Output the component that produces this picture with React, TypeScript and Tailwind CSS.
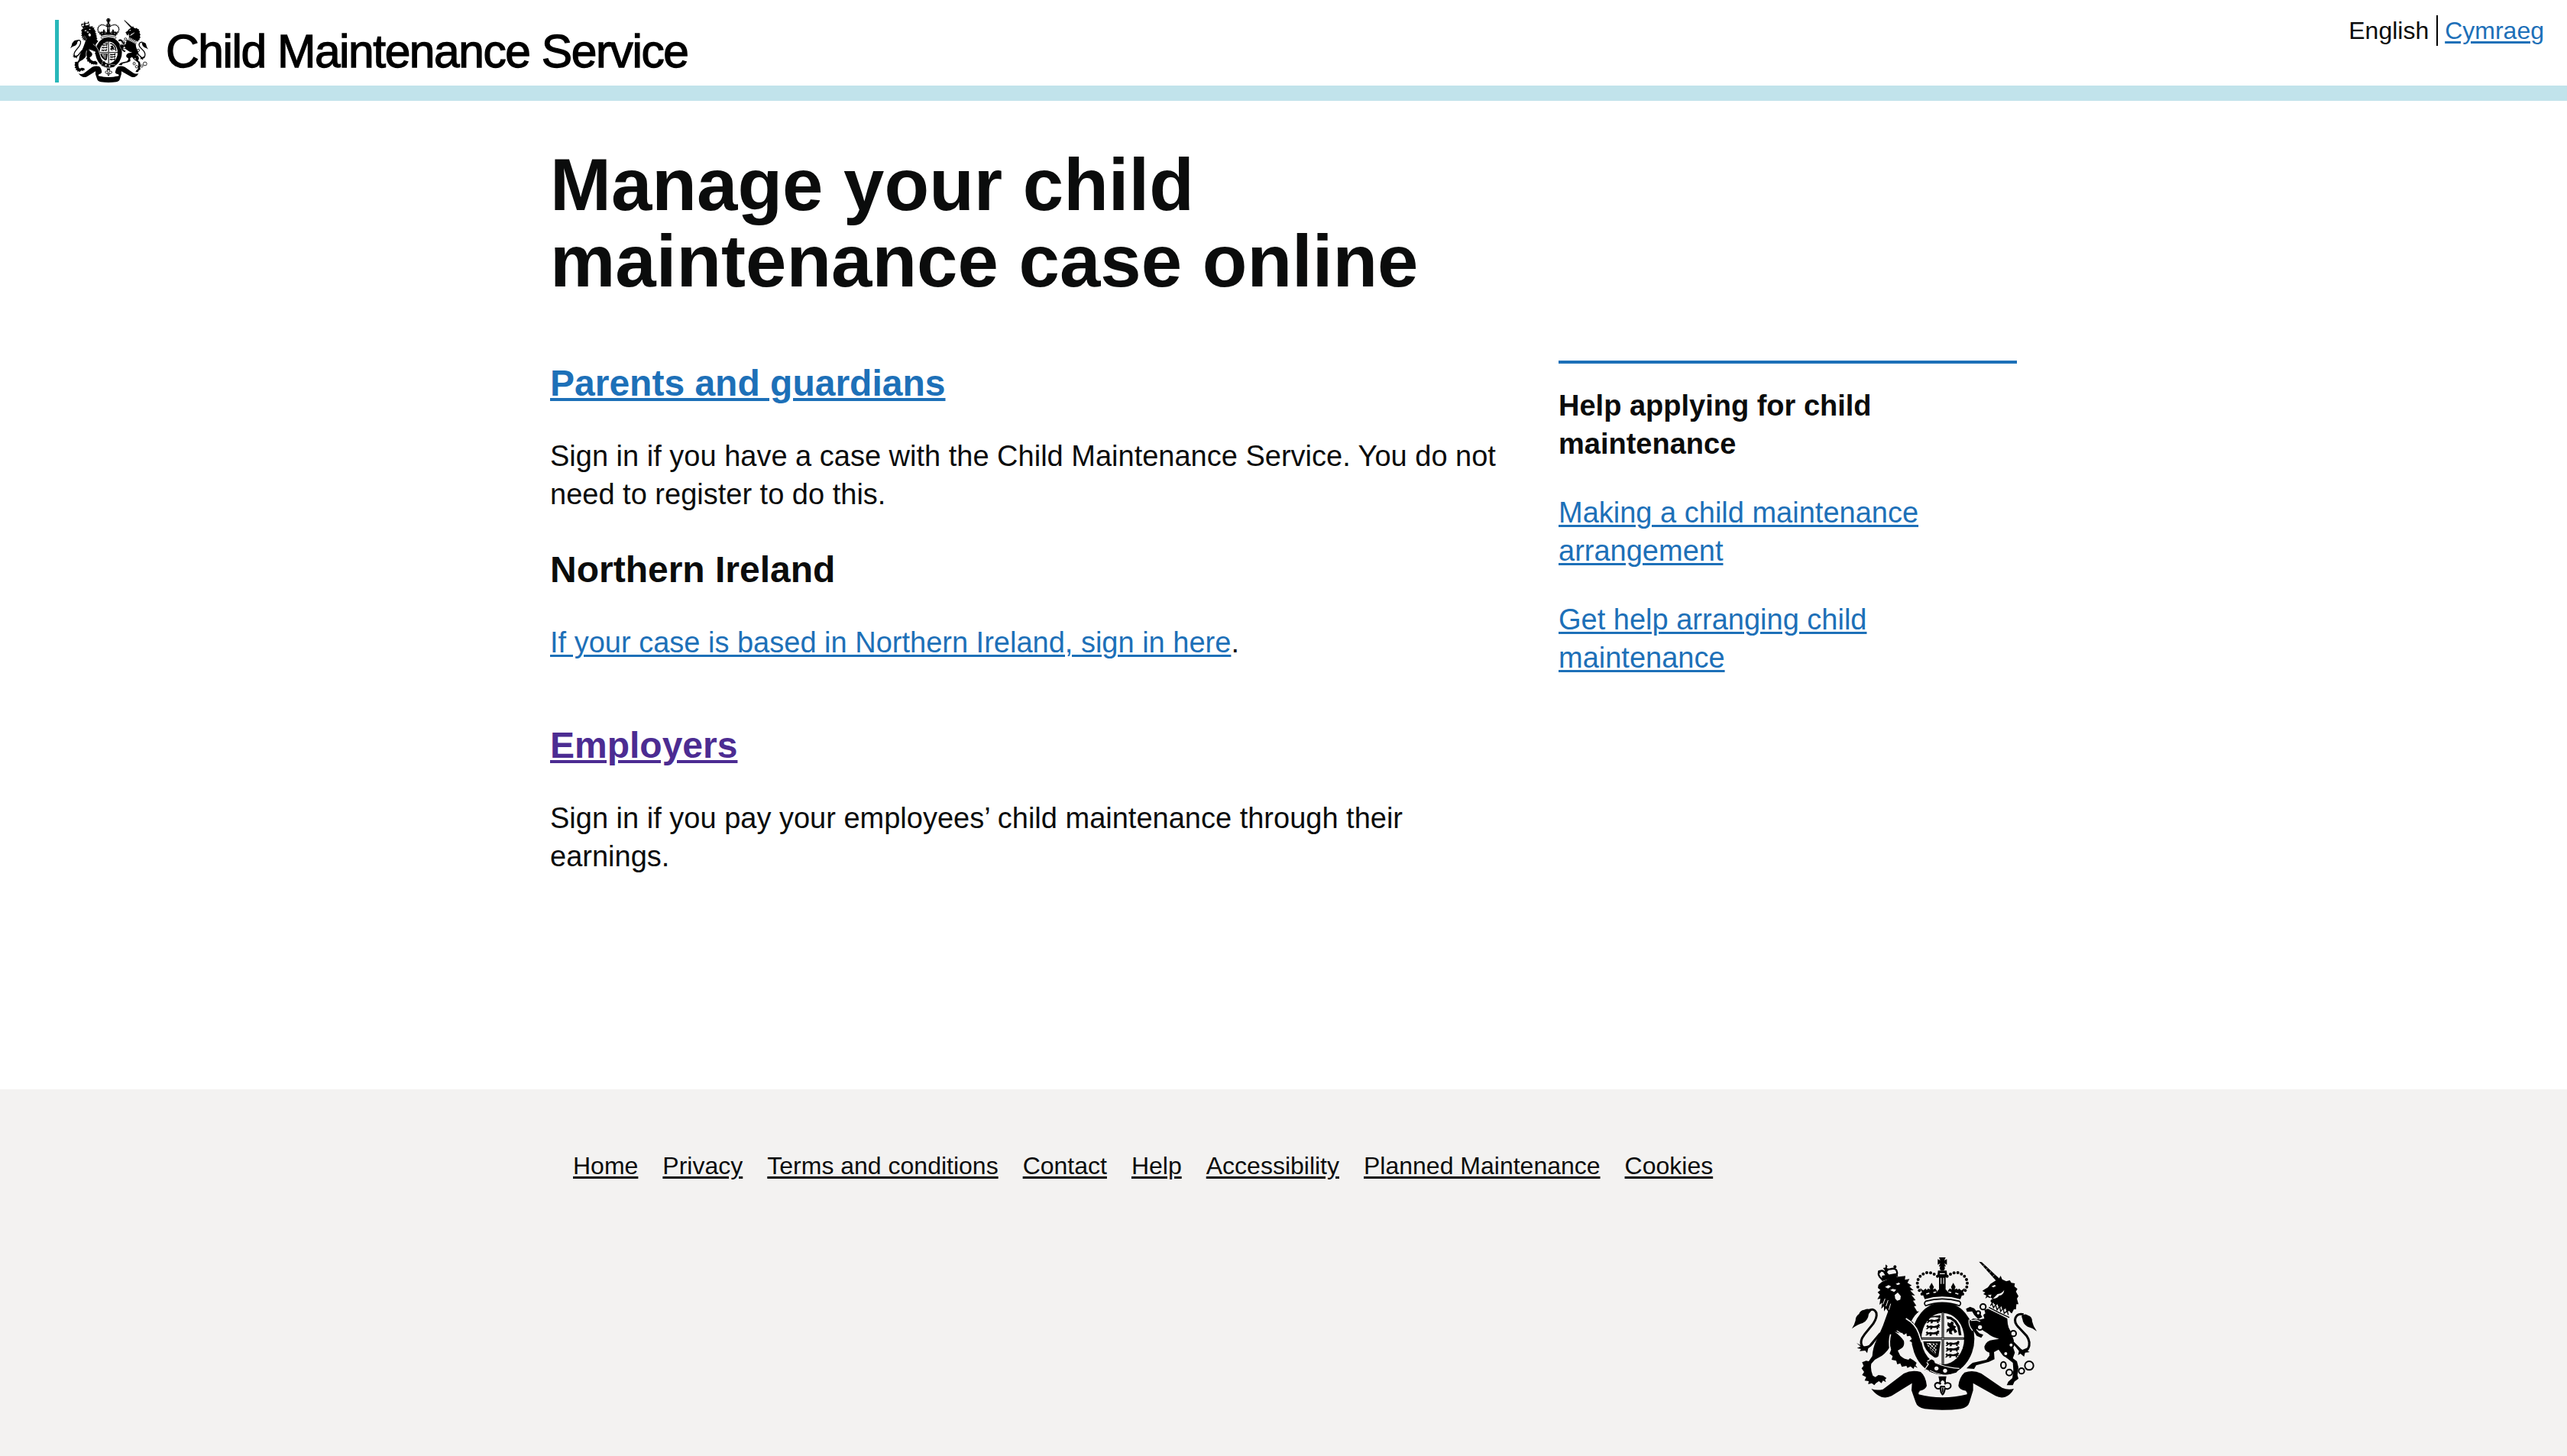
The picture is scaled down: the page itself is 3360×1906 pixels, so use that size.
import React from "react";

function CrownBeads({ cx, flip }: { cx: number; flip: boolean }) {
  const pts = [
    [-80, 222], [-90, 208], [-96, 194], [-98, 179], [-95, 165], [-87, 152], [-75, 143], [-61, 138], [-46, 139], [-32, 144], [-19, 152],
  ];
  return (
    <g>
      {pts.map(([x, y], i) => (
        <circle key={i} cx={flip ? cx - x : cx + x} cy={y} r={6} />
      ))}
    </g>
  );
}

function Fleuron({ x, y }: { x: number; y: number }) {
  return (
    <g transform={`translate(${x} ${y})`}>
      <path d="M0 -26 L9 -10 L5 0 L14 -4 L22 6 L14 14 L8 12 L10 22 H-10 L-8 12 L-14 14 L-22 6 L-14 -4 L-5 0 L-9 -10Z" />
    </g>
  );
}

function Passant({ x, y }: { x: number; y: number }) {
  return (
    <path
      transform={`translate(${x} ${y})`}
      d="M0 4 L5 -2 L10 3 L18 1 L30 3 L42 0 L48 -6 L54 -1 L50 5 L54 9 L46 8 L47 15 L40 15 L41 10 L24 10 L22 16 L14 16 L17 10 L10 10 L5 15 L-2 14 L5 9Z"
    />
  );
}

function Crest({ className, paper }: { className: string; paper: string }) {
  return (
    <svg viewBox="72 78 726 600" preserveAspectRatio="none" className={className} fill="#000" aria-hidden="true">
      {/* crown */}
      <path d="M414 78 H440 L435 90 L445 85 V107 L435 101 L441 113 H413 L419 101 L409 107 V85 L419 90Z" />
      <circle cx="427" cy="120" r="10" />
      <path d="M410 130 H444 L446 148 L440 156 V212 H414 V156 L408 148Z" />
      <path d="M422 158 V182 M432 158 V182 M417 142 H437" stroke={paper} strokeWidth="3.5" />
      <CrownBeads cx={427} flip={false} />
      <CrownBeads cx={427} flip />
      <Fleuron x={385} y={204} />
      <Fleuron x={470} y={204} />
      <Fleuron x={427} y={208} />
      <path d="M340 198 L352 208 L362 200 L370 214 H484 L492 200 L502 208 L515 198 L498 242 Q427 222 358 242Z" />
      <path d="M364 222 L376 218 M392 216 L402 214 M452 214 L462 216 M478 218 L490 222" stroke={paper} strokeWidth="5" />

      {/* garter */}
      <ellipse cx="430" cy="397" rx="123" ry="143" />
      <path d="M362 250 Q427 232 494 250 Q504 258 494 268 Q427 244 362 268 Q352 259 362 250Z" fill={paper} stroke="#000" strokeWidth="5" />
      <ellipse cx="429" cy="397" rx="84" ry="101" fill={paper} />
      <path d="M429 292 V500 M345 397 H513" stroke="#000" strokeWidth="9" />
      <path d="M429 294 V498 M347 397 H511" stroke={paper} strokeWidth="2" />
      <Passant x={366} y={321} />
      <Passant x={364} y={345} />
      <Passant x={362} y={370} />
      <path d="M370 316 L392 308 L420 305 V316 L398 313Z" />
      <path d="M442 308 L462 312 L482 326 L496 348 L502 384 H492 L486 352 L474 332 L458 321 L446 320Z" />
      <path d="M448 332 L458 337 L463 329 L472 334 L470 344 L482 350 L476 356 L486 370 L476 376 L470 364 L463 370 L467 381 L455 378 L452 366 L443 374 L445 360 L457 355 L447 345Z" />
      <path d="M352 408 H420 L412 466 Q402 476 392 468 Q356 444 352 408Z" />
      <path d="M366 414 Q376 446 400 458 L408 416Z" fill={paper} />
      <path d="M370 418 L405 450 M382 416 L407 438 M372 430 L400 456 M394 415 L408 426 M402 416 L380 446 M390 416 L373 434 M407 424 L389 453" stroke="#000" strokeWidth="4" />
      <Passant x={441} y={411} />
      <Passant x={441} y={433} />
      <Passant x={439} y={456} />

      {/* garter buckle */}
      <path d="M368 486 L384 476 L396 482 L400 492 Q450 512 496 512 L482 530 Q430 548 372 524 L356 520 L366 506Z" />
      <path d="M368 486 L384 476 L396 482 L400 492 Q446 512 494 514 M366 490 L372 498 L358 518 L374 524" fill="none" stroke={paper} strokeWidth="4" />
      <circle cx="404" cy="514" r="8" fill={paper} />
      <circle cx="438" cy="523" r="8" fill={paper} />
      <path d="M378 522 Q430 549 478 539" fill="none" stroke={paper} strokeWidth="3" />

      {/* pendant */}
      <path d="M412 545 H443 L440 566 H416Z" />
      <path d="M428 556 Q444 566 436 576 Q448 566 459 576 Q464 590 450 594 Q440 596 437 590 Q438 606 428 617 Q418 606 420 590 Q414 597 404 592 Q394 584 400 574 Q410 566 421 576 Q412 566 428 556Z" fill={paper} stroke="#000" strokeWidth="6" />
      <path d="M428 590 V608 M418 586 H438" stroke="#000" strokeWidth="6" />

      {/* lion crown */}
      <path d="M190 164 Q168 144 182 132 Q196 126 206 144 Q206 124 222 124 Q246 118 249 134 Q252 148 240 156Z" fill={paper} stroke="#000" strokeWidth="7" />
      <path d="M204 106 L212 112 L209 120 L219 124 L208 134 L218 146 L204 150 L196 138 L202 130 L194 120 L204 118Z" />
      <path d="M190 150 L246 140 L254 153 Q222 158 190 172Z" />
      <circle cx="180" cy="134" r="6" />
      <circle cx="241" cy="115" r="6" />

      {/* lion */}
      <path d="M176 186 L190 174 L222 160 L256 154 L282 151 L280 166 L298 163 L290 178 L307 188 L298 193 L314 207 L301 208 L320 228 L306 226 L322 246 L312 248 L325 268 L316 270 L328 290 L336 290 L322 306 L308 326 Q322 345 332 372 L340 394 L346 404 L338 408 L340 422 L330 414 L326 426 L318 416 L308 424 L308 412 L298 406 L308 398 L300 386 L288 388 L286 376 L274 384 L270 374 L256 376 L240 370 Q264 388 276 406 Q280 424 268 434 L252 444 L262 464 Q278 478 294 480 L300 474 L314 482 L326 492 L322 502 L330 512 L318 506 L314 516 L302 506 L290 512 L286 504 L268 508 L262 494 L250 498 L246 484 L228 480 L232 466 L220 456 L226 440 L222 426 Q214 446 190 464 L162 480 L148 496 Q144 520 154 542 L164 548 L176 540 L194 542 L208 552 L202 558 L206 568 L194 562 L188 572 L178 564 L166 572 L160 580 L150 572 L136 576 L138 564 L122 562 L128 548 L112 540 L120 528 L110 514 L118 504 L112 490 L128 484 L138 486 L152 466 Q154 434 166 408 Q182 376 194 346 L214 290 L206 278 L198 290 L198 270 L187 280 L191 256 L180 264 L184 240 L172 242 L182 224 L173 215 L184 206 L174 198Z" />
      <path d="M202 194 L216 187 L226 192 L214 200Z M244 182 L256 177 L262 182 L252 187Z M222 206 L232 202 L246 205 L238 214Z M240 226 L252 216 L264 230 L262 244 L250 248 L242 240Z" fill={paper} />
      <path d="M202 240 L194 262 M214 246 L206 270 M224 260 L217 284" stroke={paper} strokeWidth="3" />
      <path d="M284 318 Q322 340 334 376 L346 412" fill="none" stroke={paper} strokeWidth="5" />
      <path d="M338 292 Q318 306 308 330" fill="none" stroke={paper} strokeWidth="5" />
      <path d="M224 380 Q216 404 222 444" fill="none" stroke={paper} strokeWidth="5" />
      <path d="M248 366 Q264 376 296 396" fill="none" stroke={paper} strokeWidth="4" />

      {/* lion tail */}
      <path d="M136 288 Q158 274 168 296 Q172 314 156 338 L122 380 Q100 408 112 426 Q122 442 144 424 L184 376" fill="none" stroke="#000" strokeWidth="9" />
      <path d="M148 288 Q140 276 120 284 Q104 286 100 300 Q86 310 86 326 Q82 342 72 358 Q96 340 114 336 Q136 326 138 300Z" />
      <path d="M90 414 L106 428 L92 434 L108 438 L102 446 L124 444 L132 454 L136 436 L160 414 L140 424 L116 428Z" />

      {/* unicorn horn */}
      <path d="M571 95 L582 97 L652 162 L642 174Z" />
      <path d="M592 108 L586 114 M604 120 L598 127 M618 133 L611 140 M632 146 L625 153" stroke={paper} strokeWidth="2" />

      {/* unicorn head and mane */}
      <path d="M638 168 L648 164 L656 150 L662 164 L678 172 L692 168 L698 178 L712 180 L710 192 L722 202 L716 212 L726 230 L720 240 L726 262 L718 262 L716 282 L708 282 L700 298 L690 292 L672 284 L654 276 L636 264 L620 256 Q612 248 622 240 L604 234 L596 240 L600 228 L588 222 L596 216 L584 210 L592 204 L606 196 L616 182Z" />
      <path d="M606 226 L622 240 Q642 242 650 228 Q668 226 670 206 Q660 220 644 222 L626 240 L612 248 L620 224Z M620 192 L632 186 L638 190 L628 196Z" fill={paper} />

      {/* coronet collar */}
      <path d="M606 258 L614 252 L618 264 L628 256 L632 272 L644 262 L648 280 L660 270 L662 288 L676 278 L678 294 L690 288 L698 300 L688 316 Q648 302 608 274Z" fill={paper} />
      <path d="M610 274 Q650 296 690 314" fill="none" stroke="#000" strokeWidth="4" />
      <path d="M616 268 L622 258 L628 276 L636 264 L642 284 L652 270 L656 290 L666 278 L670 298 L682 288 L686 304" fill="none" stroke="#000" strokeWidth="4" />

      {/* unicorn body */}
      <path d="M606 280 Q648 300 682 318 L684 340 Q686 356 696 370 L708 404 L704 428 L712 452 L704 474 L720 486 L726 510 L722 540 L726 554 L710 566 L704 580 L680 580 L686 566 L702 552 L706 520 L704 492 L684 476 L664 462 L648 440 L630 450 L632 478 L610 488 L560 502 L552 516 L522 514 L534 502 L546 492 L600 480 L612 464 L612 452 Q592 446 592 428 Q600 404 626 402 L650 398 Q622 392 604 376 L588 366 L572 350 L560 362 L572 376 L588 382 L580 394 L562 386 L552 370 L536 348 L532 330 L548 318 L576 322 L592 318 L588 304 L596 298 L592 284Z" />
      <path d="M520 280 L536 272 L552 278 L562 290 L574 296 L584 312 L568 320 L552 304 L544 290 L524 292Z" />
      <path d="M532 322 Q528 344 546 366 M540 326 L560 324 L576 330" fill="none" stroke={paper} strokeWidth="4" />
      <path d="M526 320 Q524 350 544 376" fill="none" stroke="#000" strokeWidth="5" />

      {/* unicorn tail */}
      <path d="M746 302 Q722 296 714 316 Q708 334 726 352 L758 386 Q776 412 764 436 Q750 456 732 440 L696 404" fill="none" stroke="#000" strokeWidth="9" />
      <path d="M738 308 Q752 296 764 306 Q780 310 780 330 Q784 350 798 368 Q780 354 762 350 Q744 340 742 322Z" />
      <path d="M716 430 L740 442 L772 428 L760 444 L770 450 L752 452 L748 468 L734 456 L724 462 L728 446Z" />

      {/* chain */}
      <g fill={paper} stroke="#000" strokeWidth="6">
        <circle cx="587" cy="272" r="11" />
        <circle cx="568" cy="297" r="8" />
        <circle cx="575" cy="352" r="11" />
        <circle cx="706" cy="377" r="11" />
        <circle cx="697" cy="422" r="9" />
        <circle cx="676" cy="456" r="9" />
        <ellipse cx="667" cy="501" rx="10" ry="13" />
        <circle cx="690" cy="530" r="12" />
        <circle cx="738" cy="524" r="11" />
        <circle cx="768" cy="503" r="17" />
      </g>

      {/* motto ribbon */}
      <path d="M148 594 Q170 602 194 596 L276 534 Q308 518 342 528 Q362 544 366 582 Q362 598 338 602 L334 616 Q428 640 524 616 L520 602 Q492 598 490 582 Q494 548 514 530 Q548 518 580 534 L662 590 Q684 600 708 594 Q696 618 674 626 Q656 632 636 622 L548 572 V600 L534 646 Q528 668 500 673 Q428 682 358 673 Q328 668 322 646 L306 600 L308 572 L228 622 Q208 632 188 626 Q166 618 148 594Z" />
      <path d="M334 610 Q428 636 524 610" fill="none" stroke={paper} strokeWidth="5" />
    </svg>
  );
}

const link = "text-[#1d70b8] underline underline-offset-[3px] decoration-[3px]";
const footerLinks = ["Home", "Privacy", "Terms and conditions", "Contact", "Help", "Accessibility", "Planned Maintenance", "Cookies"];

export default function App() {
  return (
    <div className="flex h-[1906px] w-[3360px] flex-col overflow-hidden bg-white font-['Liberation_Sans',Arial,sans-serif] text-[38px] leading-[50px] text-[#0b0c0c]">
      <header className="flex h-[132px] items-start justify-between border-b-[20px] border-[#c1e3eb]">
        <div className="flex items-start pl-[72px]">
          <div className="mt-[26px] h-[82px] w-[5px] bg-[#28b7b9]" />
          <Crest className="mt-[24px] ml-[15px] h-[84px] w-[102px]" paper="#fff" />
          <span className="mt-[32px] ml-[23px] text-[60.5px] leading-[70px] tracking-[-1.45px] whitespace-nowrap text-black [-webkit-text-stroke:1.3px_black]">
            Child Maintenance Service
          </span>
        </div>
        <div className="flex pt-5 pr-[30px] text-[32px] leading-[40px]">
          <span className="border-r-2 border-black pr-[10px]">English</span>
          <a className={`${link} ml-[9px]`}>Cymraeg</a>
        </div>
      </header>

      <main className="mx-auto w-[1920px] grow pt-[60px]">
        <h1 className="w-[1240px] text-[96px] leading-[100px] font-bold">
          Manage your child
          <br />
          maintenance case online
        </h1>
        <div className="mt-20 flex justify-between">
          <div className="w-[1260px]">
            <h2 className="text-[48px] leading-[60px] font-bold">
              <a className="text-[#1d70b8] underline decoration-[4px] underline-offset-[3px]">Parents and guardians</a>
            </h2>
            <p className="mt-10">
              Sign in if you have a case with the Child Maintenance Service. You do not
              <br />
              need to register to do this.
            </p>
            <h2 className="mt-11 text-[48px] leading-[60px] font-bold">Northern Ireland</h2>
            <p className="mt-10">
              <a className={link}>If your case is based in Northern Ireland, sign in here</a>.
            </p>
            <h2 className="mt-20 text-[48px] leading-[60px] font-bold">
              <a className="text-[#4c2c92] underline decoration-[4px] underline-offset-[3px]">Employers</a>
            </h2>
            <p className="mt-10">
              Sign in if you pay your employees’ child maintenance through their
              <br />
              earnings.
            </p>
          </div>
          <aside className="w-[600px] border-t-4 border-[#1d70b8] pt-[30px]">
            <h3 className="font-bold">
              Help applying for child
              <br />
              maintenance
            </h3>
            <p className="mt-10">
              <a className={link}>
                Making a child maintenance
                <br />
                arrangement
              </a>
            </p>
            <p className="mt-10">
              <a className={link}>
                Get help arranging child
                <br />
                maintenance
              </a>
            </p>
          </aside>
        </div>
      </main>

      <footer className="h-[480px] shrink-0 bg-[#f3f2f1] pt-20">
        <div className="mx-auto w-[1920px] pl-[30px]">
          <nav className="flex gap-8 text-[32px] leading-[40px]">
            {footerLinks.map((label) => (
              <a key={label} className="underline decoration-[3px] underline-offset-[3px]">
                {label}
              </a>
            ))}
          </nav>
          <Crest className="mt-[100px] ml-[1674px] h-[200px] w-[242px]" paper="#f3f2f1" />
        </div>
      </footer>
    </div>
  );
}
